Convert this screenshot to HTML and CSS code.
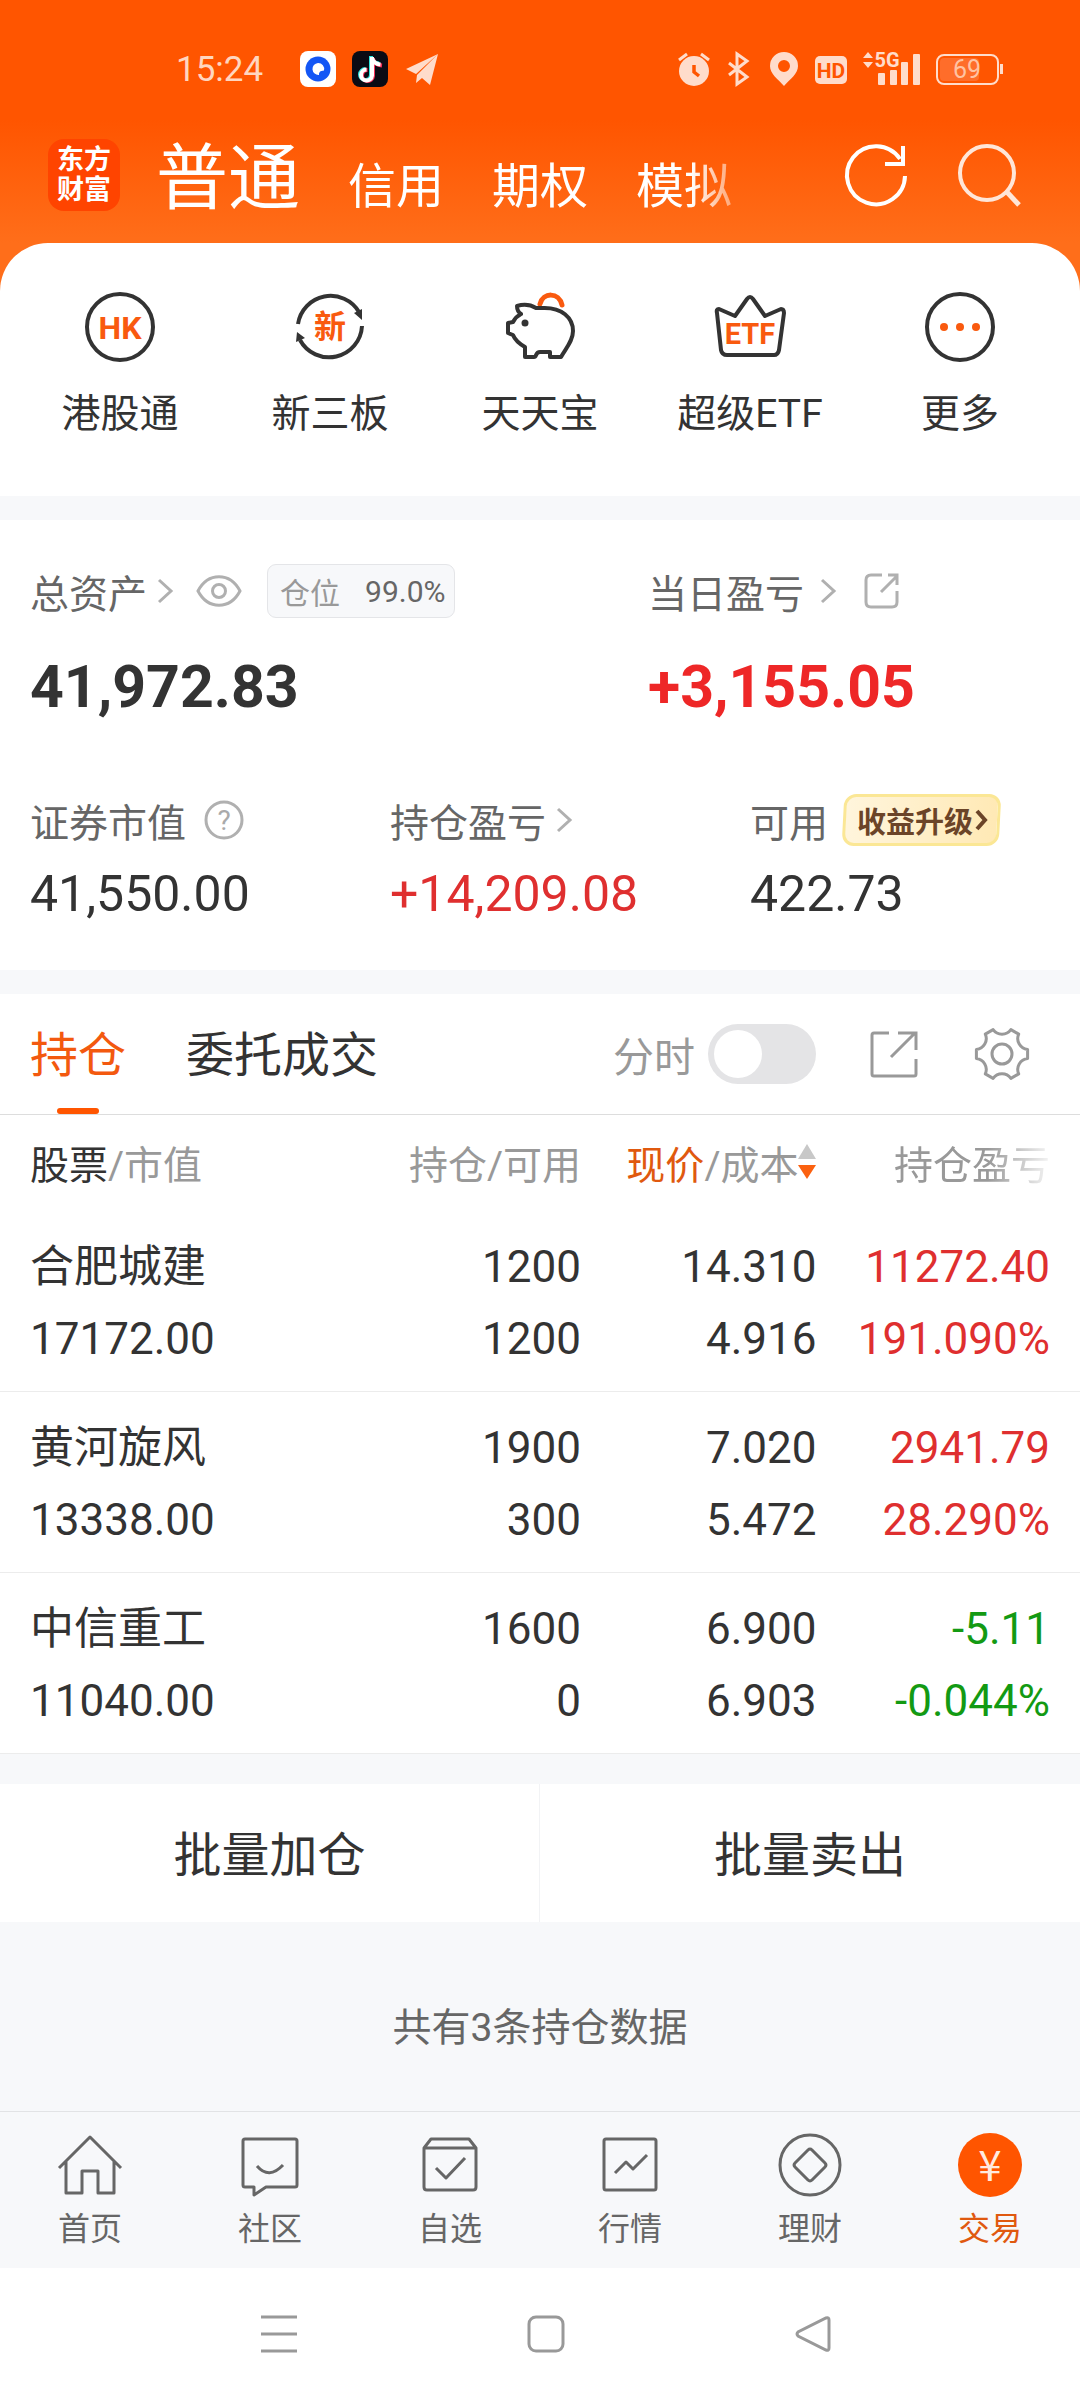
FILE: index.html
```html
<!DOCTYPE html>
<html lang="zh-CN">
<head>
  <meta charset="UTF-8" />
  <meta name="viewport" content="width=device-width, initial-scale=1.0" />
  <title>东方财富 - 交易</title>
  <link rel="stylesheet" href="styles.css">
</head>
<body>
  <div class="top">
    <div class="status-bar">
      <div class="status-left">
        <span class="time">15:24</span>
        <div class="status-apps">
          <svg width="36" height="36" viewBox="0 0 36 36">
            <rect width="36" height="36" rx="8" fill="#fff" />
            <circle cx="18" cy="18" r="12.5" fill="#1356f5" />
            <path d="M18 12a6 6 0 1 0 1 12c0-3 1-4 5-4.500a6 6 0 0 0-6-7.500z" fill="#fff" />
          </svg>
          <svg width="36" height="36" viewBox="0 0 36 36">
            <rect width="36" height="36" rx="8" fill="#0a0b14" />
            <g fill="none" stroke-width="4">
              <path d="M19 5v19a5.500 5.500 0 1 1-5.500-6M19 6c1 4 4 6 8 6.500" stroke="#2ee6e0" />
              <path d="M21 7v18a5.500 5.500 0 1 1-5.500-6M21 8c1 4 4 6 9 6.500" stroke="#f5305a" />
              <path d="M20 6v18.500a5.500 5.500 0 1 1-5.500-6M20 7c1 4 4 6 8.500 6.500" stroke="#fff" />
            </g>
          </svg>
          <svg width="36" height="36" viewBox="0 0 36 36">
            <path d="M2 18 34 3 12 23z M13 24 34 3 26 34 18 27 12 32z" fill="#ffdccb" />
          </svg>
        </div>
      </div>
      <div class="status-right">
        <svg width="34" height="34" viewBox="0 0 34 34">
          <circle cx="17" cy="19" r="15" fill="#ffdccb" />
          <path d="M2 8 10 2M32 8 24 2" stroke="#ffdccb" stroke-width="3" />
          <path d="M17 13v7l5 4" fill="none" stroke="#ff5500" stroke-width="3.500" />
        </svg>
        <svg width="24" height="34" viewBox="0 0 24 34">
          <path d="M2 11 20 25 10 32V2L20 9 2 23" fill="none" stroke="#ffdccb" stroke-width="3" />
        </svg>
        <svg width="32" height="34" viewBox="0 0 32 34">
          <path d="M17 0a14 14 0 0 1 14 14c0 8-8 13-14 20C11 27 3 22 3 14A14 14 0 0 1 17 0zm0 8a6 6 0 1 0 0 12 6 6 0 0 0 0-12z" fill="#ffdccb" />
        </svg>
        <svg width="32" height="34" viewBox="0 0 32 34">
          <rect y="4" width="32" height="28" rx="5" fill="#ffdccb" />
          <text x="16" y="26" class="icon-text" font-size="21" fill="#ff5500">HD</text>
        </svg>
        <svg width="57" height="34" viewBox="0 0 57 34">
          <path d="M0 6 5 0 10 6zM0 10H10L5 16z" fill="#ffdccb" />
          <text x="24" y="15" class="icon-text" font-size="20" fill="#ffdccb">5G</text>
          <g fill="#ffdccb">
            <rect x="15" y="21" width="7" height="12" rx="1" />
            <rect x="27" y="18" width="7" height="15" rx="1" />
            <rect x="38" y="10" width="7" height="23" rx="1" />
            <rect x="50" y="2" width="7" height="31" rx="1" />
          </g>
        </svg>
        <svg width="67" height="34" viewBox="0 0 67 34">
          <rect x="1" y="3" width="61" height="29" rx="7" fill="none" stroke="#ffdccb" stroke-width="2" />
          <rect x="4" y="6" width="39" height="23" rx="4" fill="#ff6d2a" />
          <path d="M65.500 12v10" stroke="#ffdccb" stroke-width="3" />
          <text x="31" y="26" text-anchor="middle" font-size="25" fill="#ffc3a3">69</text>
        </svg>
      </div>
    </div>

    <header class="header">
      <div class="logo"><span>东方</span><span>财富</span></div>
      <nav class="account-tabs">
        <a href="#" class="active">普通</a>
        <a href="#">信用</a>
        <a href="#">期权</a>
        <a href="#">模拟</a>
      </nav>
      <div class="header-actions">
        <button type="button" aria-label="刷新">
          <svg width="64" height="64" viewBox="0 0 64 64" fill="none" stroke="#fff" stroke-width="4">
            <path d="M61 33A29 29 0 1 1 56 16M59 3V21H41" />
          </svg>
        </button>
        <button type="button" aria-label="搜索">
          <svg width="64" height="64" viewBox="0 0 64 64" fill="none" stroke="#ffe6d8" stroke-width="4">
            <circle cx="31" cy="30" r="27" />
            <path d="M50 48 63 62" stroke-width="5" />
          </svg>
        </button>
      </div>
    </header>

    <nav class="shortcuts">
      <a href="#">
        <svg width="72" height="72" viewBox="0 0 72 72">
          <circle cx="36" cy="36" r="33" fill="none" stroke="#333" stroke-width="4" />
          <text x="36" y="48" class="icon-text" font-size="32" fill="#f95a0f">HK</text>
        </svg>
        <span>港股通</span>
      </a>
      <a href="#">
        <svg width="72" height="72" viewBox="0 0 72 72">
          <path d="M4 33A33 33 0 0 1 65 21M68 35A33 33 0 0 1 6 49" fill="none" stroke="#333" stroke-width="4" />
          <path d="M60 22 68 18V29zM3 41 11 47 2 51z" fill="#333" />
          <text x="36" y="47" class="icon-text" font-size="32" fill="#f95a0f">新</text>
        </svg>
        <span>新三板</span>
      </a>
      <a href="#">
        <svg width="72" height="72" viewBox="0 0 72 72" fill="none" stroke-width="4" stroke-linejoin="round" stroke-linecap="round">
          <path d="M36 13C39 1 55 1 58 14" stroke="#f95a0f" stroke-width="5" />
          <path d="M13 15C20 13 27 14 32 17H38C58 16 69 27 69 40C69 50 62 57 57 66H46V61H36C31 61 33 66 30 66H21V56C14 52 11 49 9 44L4 42V32L9 31C11 27 13 25 17 23C14 21 13 19 13 15z" stroke="#333" />
          <circle cx="21" cy="32" r="3.500" fill="#333" />
        </svg>
        <span>天天宝</span>
      </a>
      <a href="#">
        <svg width="72" height="72" viewBox="0 0 72 72">
          <path d="M5 18 21 25 33 8Q36 4 39 8L51 25 67 18Q70 18 70 22L65 59Q64 64 60 64H13Q8 64 7 59L3 22Q2 18 5 18z" fill="none" stroke="#333" stroke-width="4" stroke-linejoin="round" />
          <text x="36" y="53" class="icon-text" font-size="29" fill="#f95a0f">ETF</text>
        </svg>
        <span>超级ETF</span>
      </a>
      <a href="#">
        <svg width="72" height="72" viewBox="0 0 72 72">
          <circle cx="36" cy="36" r="33" fill="none" stroke="#333" stroke-width="4" />
          <g fill="#f95a0f">
            <circle cx="20" cy="36" r="4" />
            <circle cx="36" cy="36" r="4" />
            <circle cx="52" cy="36" r="4" />
          </g>
        </svg>
        <span>更多</span>
      </a>
    </nav>
  </div>

  <main>
    <section class="assets">
      <div class="assets-main">
        <div>
          <div class="label">
            <a href="#" class="label-link">总资产
              <svg width="16" height="24" viewBox="0 0 16 24" class="line-icon"><path d="M2 1 14 12 2 23" /></svg>
            </a>
            <button type="button" class="eye" aria-label="隐藏金额">
              <svg width="46" height="32" viewBox="0 0 46 32" class="line-icon">
                <path d="M2 16C12-3 34-3 44 16C34 35 12 35 2 16z" />
                <circle cx="23" cy="16" r="6.500" />
              </svg>
            </button>
            <span class="position"><span>仓位</span><b>99.0%</b></span>
          </div>
          <div class="total">41,972.83</div>
        </div>
        <div>
          <div class="label">
            <a href="#" class="label-link wide">当日盈亏
              <svg width="16" height="24" viewBox="0 0 16 24" class="line-icon"><path d="M2 1 14 12 2 23" /></svg>
            </a>
            <button type="button" class="share" aria-label="分享">
              <svg width="36" height="36" viewBox="0 0 36 36" class="line-icon">
                <path d="M18 2H7Q2 2 2 7V29Q2 34 7 34H28Q33 34 33 29V18M17 19 33 3M24 2H33V12" />
              </svg>
            </button>
          </div>
          <div class="total up">+3,155.05</div>
        </div>
      </div>
      <div class="assets-sub">
        <div>
          <div class="label">证券市值
            <svg width="40" height="40" viewBox="0 0 40 40" class="help">
              <circle cx="20" cy="20" r="18" fill="none" stroke="#b0b0b0" stroke-width="3" />
              <text x="20" y="30" text-anchor="middle" font-size="28" fill="#aaa">?</text>
            </svg>
          </div>
          <div class="amount">41,550.00</div>
        </div>
        <div>
          <div class="label">
            <a href="#" class="label-link">持仓盈亏
              <svg width="16" height="24" viewBox="0 0 16 24" class="line-icon"><path d="M2 1 14 12 2 23" /></svg>
            </a>
          </div>
          <div class="amount up">+14,209.08</div>
        </div>
        <div>
          <div class="label">可用
            <button type="button" class="upgrade">收益升级
              <svg width="13" height="22" viewBox="0 0 13 22"><path d="M2 2 10 11 2 20" fill="none" stroke="#6b4428" stroke-width="4" /></svg>
            </button>
          </div>
          <div class="amount">422.73</div>
        </div>
      </div>
    </section>

    <section class="holdings">
      <div class="holdings-bar">
        <nav class="holdings-tabs">
          <a href="#" class="active">持仓</a>
          <a href="#">委托成交</a>
        </nav>
        <label class="switch" for="minuteChart">分时
          <input type="checkbox" id="minuteChart" />
        </label>
        <button type="button" aria-label="分享持仓">
          <svg width="48" height="48" viewBox="0 0 48 48" fill="none" stroke="#999" stroke-width="3">
            <path d="M19 3H4Q2 3 2 5V44Q2 46 4 46H44Q46 46 46 44V29M21 27 45 3M28 3H46V20" />
          </svg>
        </button>
        <button type="button" aria-label="设置">
          <svg width="54" height="54" viewBox="0 0 54 54" fill="none" stroke="#999" stroke-width="3" stroke-linejoin="round">
            <path d="M52.600 31.500V22.500A11 11 0 0 1 43.700 7.100L35.900 2.600A11 11 0 0 1 18.100 2.600L10.300 7.100A11 11 0 0 1 1.400 22.500V31.500A11 11 0 0 1 10.300 46.900L18.100 51.400A11 11 0 0 1 35.900 51.400L43.700 46.900A11 11 0 0 1 52.600 31.500z" />
            <circle cx="27" cy="27" r="10" />
          </svg>
        </button>
      </div>

      <table>
        <thead>
          <tr>
            <th><em>股票</em>/市值</th>
            <th>持仓/可用</th>
            <th>
              <button type="button" class="sort"><span><em>现价</em>/成本</span>
                <svg width="18" height="36" viewBox="0 0 18 36">
                  <path d="M9 0 18 15H0z" fill="#c8c8c8" />
                  <path d="M9 35 18 21H0z" fill="#fb6110" />
                </svg>
              </button>
            </th>
            <th><span class="fade">持仓盈亏</span></th>
          </tr>
        </thead>
        <tbody>
          <tr>
            <td><span>合肥城建</span><span>17172.00</span></td>
            <td><span>1200</span><span>1200</span></td>
            <td><span>14.310</span><span>4.916</span></td>
            <td class="up"><span>11272.40</span><span>191.090%</span></td>
          </tr>
          <tr>
            <td><span>黄河旋风</span><span>13338.00</span></td>
            <td><span>1900</span><span>300</span></td>
            <td><span>7.020</span><span>5.472</span></td>
            <td class="up"><span>2941.79</span><span>28.290%</span></td>
          </tr>
          <tr>
            <td><span>中信重工</span><span>11040.00</span></td>
            <td><span>1600</span><span>0</span></td>
            <td><span>6.900</span><span>6.903</span></td>
            <td class="down"><span>-5.11</span><span>-0.044%</span></td>
          </tr>
        </tbody>
      </table>
    </section>

    <div class="batch">
      <button type="button">批量加仓</button>
      <button type="button">批量卖出</button>
    </div>

    <p class="summary">共有3条持仓数据</p>
  </main>

  <nav class="tab-bar">
    <a href="#">
      <svg width="64" height="64" viewBox="0 0 64 64">
        <path d="M1 35 32 4 63 35M8 28V60H24V38H40V60H56V28" />
      </svg>
      <span>首页</span>
    </a>
    <a href="#">
      <svg width="64" height="64" viewBox="0 0 64 64">
        <path d="M7 6H57Q59 6 59 8V52Q59 54 57 54H28L16 62V54H7Q5 54 5 52V8Q5 6 7 6zM19 33Q31 47 45 32" />
      </svg>
      <span>社区</span>
    </a>
    <a href="#">
      <svg width="64" height="64" viewBox="0 0 64 64">
        <path d="M6 15 13 6H51L58 15V54Q58 57 55 57H9Q6 57 6 54zM6 15H58M18 35 28 45 47 25" />
      </svg>
      <span>自选</span>
    </a>
    <a href="#">
      <svg width="64" height="64" viewBox="0 0 64 64">
        <rect x="6" y="6" width="52" height="51" rx="2" />
        <path d="M17 40 28 29 35 36 49 22" />
      </svg>
      <span>行情</span>
    </a>
    <a href="#">
      <svg width="64" height="64" viewBox="0 0 64 64">
        <circle cx="32" cy="32" r="30" />
        <path d="M30 17Q32 15 34 17L47 30Q49 32 47 34L34 47Q32 49 30 47L17 34Q15 32 17 30z" />
      </svg>
      <span>理财</span>
    </a>
    <a href="#" class="active">
      <svg width="64" height="64" viewBox="0 0 64 64">
        <circle cx="32" cy="32" r="32" class="coin" />
        <text x="32" y="48" text-anchor="middle" font-size="42" class="yen">¥</text>
      </svg>
      <span>交易</span>
    </a>
  </nav>

  <div class="system-nav">
    <button type="button" aria-label="最近任务">
      <svg width="36" height="38" viewBox="0 0 36 38"><path d="M0 2H36M0 19H36M0 36H36" /></svg>
    </button>
    <button type="button" aria-label="主屏幕">
      <svg width="38" height="38" viewBox="0 0 38 38"><rect x="2" y="2" width="34" height="34" rx="7" /></svg>
    </button>
    <button type="button" aria-label="返回">
      <svg width="36" height="38" viewBox="0 0 36 38"><path d="M31 3Q34 2 34 5V33Q34 36 31 35L3 21Q1 19 3 17z" /></svg>
    </button>
  </div>
</body>
</html>
```

FILE: styles.css
```css
* {
  box-sizing: border-box;
}

body {
  margin: 0;
  font-family: Roboto, "Noto Sans CJK SC", sans-serif;
  color: #333;
  background-color: #fff;
}

a {
  color: inherit;
  text-decoration: none;
}

button {
  padding: 0;
  border: none;
  background: none;
  font: inherit;
  color: inherit;
  cursor: pointer;
}

svg {
  display: block;
  flex-shrink: 0;
  overflow: visible;
}

.icon-text {
  font-weight: 700;
  text-anchor: middle;
}

/* header */
.top {
  background: linear-gradient(#ff5500 120px, #ff6e1a 243px);
}

.status-bar {
  display: flex;
  justify-content: space-between;
  align-items: center;
  height: 138px;
  padding: 0 77px 0 176px;
}

.status-left,
.status-apps,
.status-right {
  display: flex;
  align-items: center;
}

.status-left {
  gap: 37px;
}

.status-apps,
.status-right {
  gap: 16px;
}

.time {
  font-size: 35px;
  color: #ffd6bf;
}

.header {
  display: flex;
  align-items: center;
  height: 74px;
  margin-bottom: 31px;
  padding: 0 60px 0 48px;
}

.logo {
  display: flex;
  flex-direction: column;
  justify-content: center;
  width: 72px;
  height: 72px;
  border-radius: 16px;
  background-color: #ff4400;
  color: #fff;
  font-size: 27px;
  font-weight: 700;
  line-height: 30px;
  text-align: center;
}

.account-tabs {
  display: flex;
  flex: 1;
  align-items: baseline;
  gap: 48px;
  margin: 0 28px 0 36px;
  padding-top: 16px;
  color: #fff;
  font-size: 48px;
  line-height: 74px;
  white-space: nowrap;
  -webkit-mask-image: linear-gradient(to right, #000 81%, transparent 92%);
  mask-image: linear-gradient(to right, #000 81%, transparent 92%);
}

.account-tabs .active {
  font-size: 72px;
}

.header-actions {
  display: flex;
  gap: 48px;
}

/* shortcuts */
.shortcuts {
  display: grid;
  grid-template-columns: repeat(5, 1fr);
  padding: 48px 15px 58px;
  border-radius: 48px 48px 0 0;
  background-color: #fff;
}

.shortcuts a {
  display: flex;
  flex-direction: column;
  align-items: center;
  gap: 27px;
  font-size: 39px;
  line-height: 48px;
}

/* assets */
main {
  padding-top: 24px;
  background-color: #f7f8fa;
}

.assets {
  padding: 44px 0 48px 30px;
  background-color: #fff;
}

.assets-main {
  display: grid;
  grid-template-columns: 618fr 432fr;
  margin-bottom: 70px;
}

.assets-sub {
  display: grid;
  grid-template-columns: 360fr 360fr 330fr;
}

.label {
  display: flex;
  align-items: center;
  height: 54px;
  font-size: 39px;
  color: #666;
}

.label-link {
  display: flex;
  align-items: center;
  gap: 10px;
}

.label-link.wide {
  gap: 16px;
}

.line-icon {
  fill: none;
  stroke: #b0b0b0;
  stroke-width: 3;
}

.eye {
  margin: 0 25px 0 23px;
}

.share {
  margin-left: 28px;
}

.help {
  margin-left: 18px;
}

.position {
  display: flex;
  align-items: center;
  gap: 25px;
  height: 54px;
  padding: 0 9px 0 12px;
  border: 1px solid #e4e5e8;
  border-radius: 9px;
  background-color: #f7f8fa;
  color: #999;
  font-size: 30px;
}

.position b {
  color: #666;
  font-weight: 400;
}

.total {
  margin-top: 33px;
  font-size: 59px;
  font-weight: 700;
  line-height: 72px;
}

.amount {
  margin-top: 19px;
  font-size: 50px;
  line-height: 56px;
}

.up {
  color: #df2f2f;
}

.total.up {
  color: #ee2727;
}

.down {
  color: #139a13;
}

.upgrade {
  position: relative;
  z-index: 0;
  display: flex;
  align-items: center;
  gap: 2px;
  height: 52px;
  margin-left: 15px;
  padding: 0 12px 0 14px;
  color: #6b4428;
  font-size: 29px;
  font-weight: 700;
}

.upgrade::before {
  content: "";
  position: absolute;
  inset: 0;
  z-index: -1;
  border: 3px solid #fbe795;
  border-radius: 12px;
  background: linear-gradient(to right, #fff5dc, #ffe9b5);
  transform: skewX(-3deg);
}

/* holdings */
.holdings {
  margin-top: 24px;
  background-color: #fff;
}

.holdings-bar {
  display: flex;
  align-items: center;
  height: 121px;
  padding: 0 51px 0 30px;
  border-bottom: 1px solid #ddd;
}

.holdings-tabs {
  display: flex;
  flex: 1;
  align-self: stretch;
  gap: 60px;
  font-size: 48px;
  line-height: 124px;
}

.holdings-tabs a {
  height: 120px;
}

.holdings-tabs .active {
  position: relative;
  color: #f3590f;
}

.holdings-tabs .active::after {
  content: "";
  position: absolute;
  bottom: 0;
  left: 50%;
  width: 42px;
  height: 6px;
  margin-left: -21px;
  border-radius: 3px;
  background-color: #ff5500;
}

.switch {
  display: flex;
  align-items: center;
  gap: 13px;
  color: #999;
  font-size: 41px;
}

.switch input {
  appearance: none;
  width: 108px;
  height: 60px;
  margin: 0 54px 0 0;
  padding: 6px;
  border-radius: 30px;
  background-color: #e4e4e6;
}

.switch input::before {
  content: "";
  display: block;
  width: 48px;
  height: 48px;
  border-radius: 50%;
  background-color: #fff;
}

.switch input:checked {
  background-color: #ff5500;
}

.switch input:checked::before {
  margin-left: 48px;
}

.holdings-bar button + button {
  margin-left: 57px;
}

table {
  width: 100%;
  table-layout: fixed;
  border-collapse: collapse;
}

th,
td {
  width: 21.8%;
  padding: 0;
  text-align: right;
  white-space: nowrap;
}

th {
  height: 96px;
  padding-bottom: 2px;
  color: #999;
  font-size: 39px;
  font-weight: 400;
}

th:first-child,
td:first-child {
  width: 32%;
  padding-left: 30px;
  text-align: left;
}

th:last-child,
td:last-child {
  width: 24.4%;
  padding-right: 30px;
}

th em {
  color: #333;
  font-style: normal;
}

.sort {
  display: inline-flex;
  align-items: center;
}

.sort em {
  color: #e0590f;
}

.fade {
  -webkit-mask-image: linear-gradient(to right, #000 60%, rgba(0, 0, 0, 0.1));
  mask-image: linear-gradient(to right, #000 60%, rgba(0, 0, 0, 0.1));
}

td {
  padding-top: 20px;
  padding-bottom: 16px;
  border-bottom: 1px solid #ececec;
  font-size: 44px;
  line-height: 72px;
}

td span {
  display: block;
}

/* batch actions */
.batch {
  display: grid;
  grid-template-columns: 1fr 1fr;
  margin-top: 30px;
  background-color: #fff;
}

.batch button {
  height: 138px;
  padding-bottom: 4px;
  font-size: 48px;
}

.batch button:first-child {
  border-right: 1px solid #f2f3f5;
}

.summary {
  margin: 0;
  padding: 82px 0 59px;
  color: #666;
  font-size: 39px;
  line-height: 48px;
  text-align: center;
}

/* bottom bars */
.tab-bar {
  display: grid;
  grid-template-columns: repeat(6, 1fr);
  padding: 21px 0;
  border-top: 1px solid #e2e3e5;
  background-color: #f7f8fa;
}

.tab-bar a {
  display: flex;
  flex-direction: column;
  align-items: center;
  gap: 14px;
  color: #666;
  font-size: 32px;
  line-height: 36px;
}

.tab-bar svg {
  fill: none;
  stroke: #666;
  stroke-width: 3;
  stroke-linejoin: round;
}

.tab-bar .active {
  color: #e0590f;
}

.tab-bar .coin {
  fill: #ff5500;
  stroke: none;
}

.tab-bar .yen {
  fill: #ffeadf;
  stroke: none;
  font-family: "Noto Sans CJK SC", sans-serif;
}

.system-nav {
  display: grid;
  grid-template-columns: repeat(3, 1fr);
  justify-items: center;
  align-items: center;
  height: 132px;
  padding: 0 134px 0 146px;
}

.system-nav svg {
  fill: none;
  stroke: #999;
  stroke-width: 3;
}
```
